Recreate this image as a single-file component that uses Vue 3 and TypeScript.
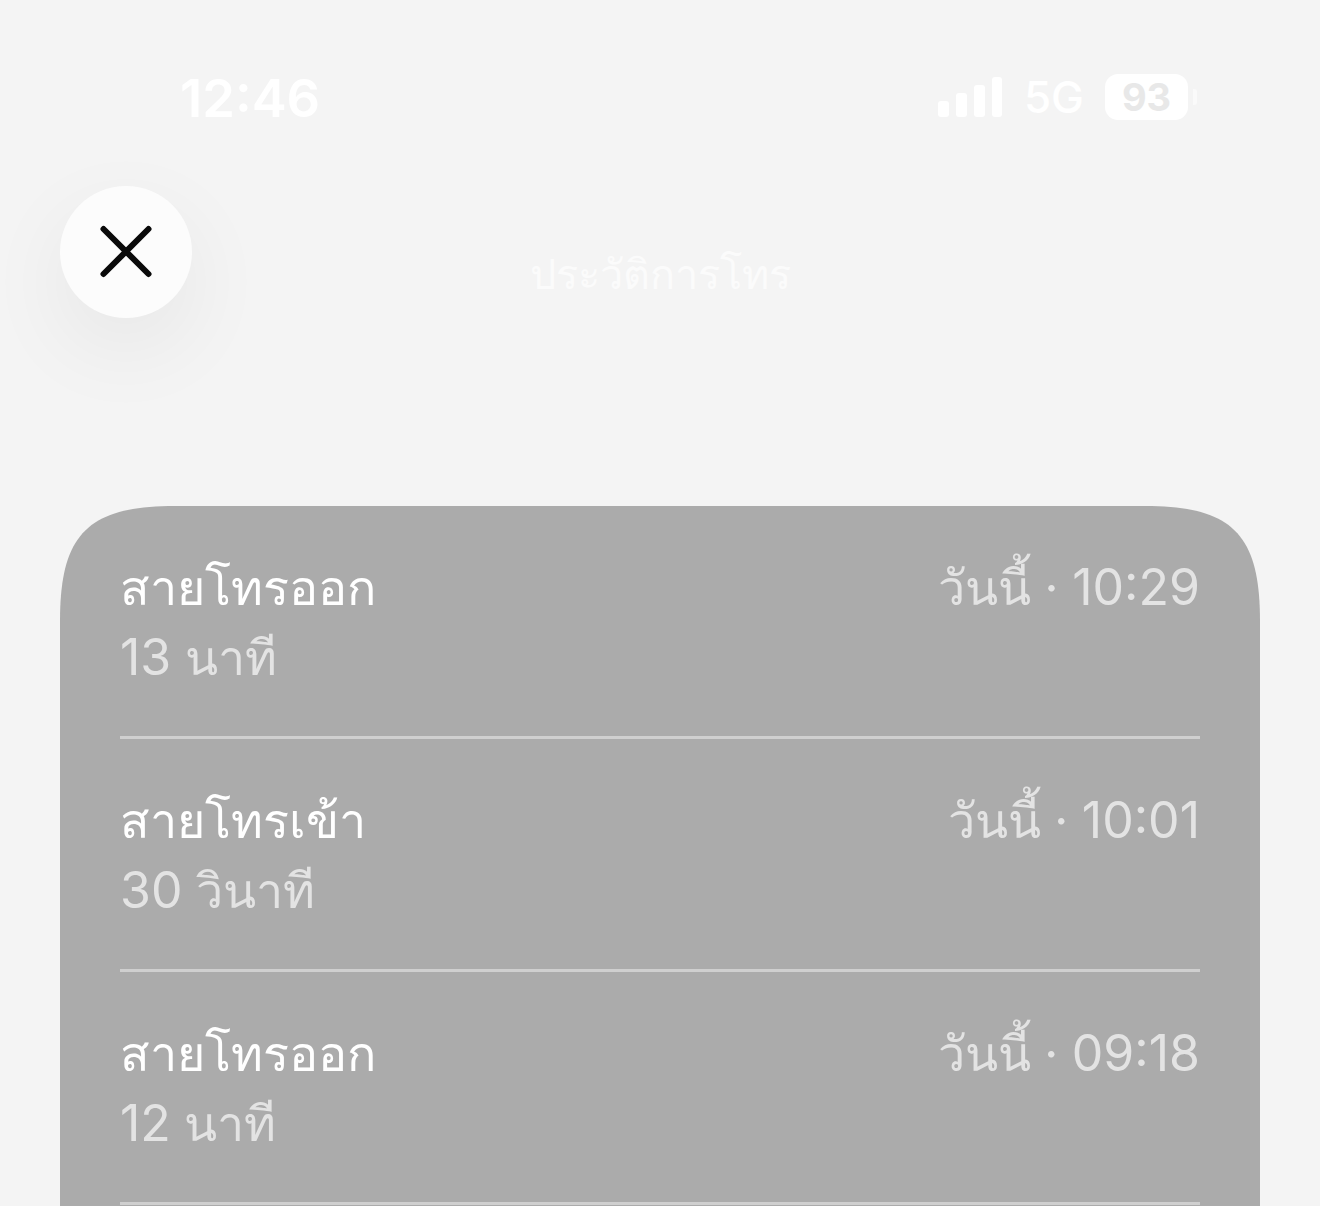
<script setup lang="ts">
type CallRow = {
    title: string
    amount: string
    unit: string
    clock: string
}

const calls: CallRow[] = [
    { title: 'สายโทรออก', amount: '13', unit: 'นาที', clock: '10:29' },
    { title: 'สายโทรเข้า', amount: '30', unit: 'วินาที', clock: '10:01' },
    { title: 'สายโทรออก', amount: '12', unit: 'นาที', clock: '09:18' },
]
</script>

<template>
    <div id="screen">
        <div id="status-bar">
            <span id="clock">12:46</span>
            <div id="status-icons">
                <svg width="66" height="42" viewBox="0 0 66 42" fill="#fff">
                    <rect x="1" y="25" width="11" height="16" rx="3" />
                    <rect x="19" y="17" width="11" height="24" rx="3" />
                    <rect x="37" y="9" width="11" height="32" rx="3" />
                    <rect x="55" y="1" width="10" height="40" rx="3" />
                </svg>
                <span id="network">5G</span>
                <div id="battery">
                    <div id="battery-body">93</div>
                    <div id="battery-tip"></div>
                </div>
            </div>
        </div>

        <div id="header">
            <button id="close-btn">
                <svg width="56" height="56" viewBox="0 0 56 56" fill="none" stroke="#0a0a0a" stroke-width="6" stroke-linecap="round">
                    <path d="M5.5 5 L50.5 50" />
                    <path d="M50.5 5 L5.5 50" />
                </svg>
            </button>
            <div id="title">ประวัติการโทร</div>
        </div>

        <div id="card">
            <div v-for="(call, i) in calls" :key="i" class="call-row">
                <div class="call-top">
                    <span class="call-title">{{ call.title }}</span>
                    <span class="call-time">วันนี้ · <span class="digits">{{ call.clock }}</span></span>
                </div>
                <div class="call-duration"><span class="digits">{{ call.amount }}</span> {{ call.unit }}</div>
            </div>
        </div>
    </div>
</template>

<style scoped>
#screen {
    width: 1320px;
    height: 1206px;
    overflow: hidden;
    background-color: #f4f4f4;
    font-family: Inter, "Noto Sans", "DejaVu Sans", sans-serif;
    display: flex;
    flex-flow: column nowrap;
}

#status-bar {
    height: 186px;
    flex: none;
    padding: 64px 123px 0 180px;
    box-sizing: border-box;
    display: flex;
    flex-flow: row nowrap;
    justify-content: space-between;
    align-items: flex-start;
    color: #fff;
}

#clock {
    font-size: 52.5px;
    font-weight: 600;
    line-height: 68px;
}

#status-icons {
    display: flex;
    flex-flow: row nowrap;
    align-items: center;
    gap: 21px;
    height: 66px;
}

#network {
    font-size: 44px;
    font-weight: 500;
    line-height: 66px;
}

#battery {
    display: flex;
    flex-flow: row nowrap;
    align-items: center;
    gap: 5px;
}

#battery-body {
    width: 83px;
    height: 46px;
    border-radius: 13px;
    background-color: #fff;
    color: #e8e8e8;
    font-size: 38px;
    font-weight: 700;
    line-height: 46px;
    text-align: center;
}

#battery-tip {
    width: 4px;
    height: 16px;
    border-radius: 0 3px 3px 0;
    background-color: #fafafa;
}

#header {
    height: 320px;
    flex: none;
    padding-left: 60px;
    display: flex;
    flex-flow: row nowrap;
    align-items: flex-start;
    position: relative;
}

#close-btn {
    width: 132px;
    height: 132px;
    border: none;
    border-radius: 50%;
    padding: 0;
    background-color: #fcfcfc;
    box-shadow: 0 30px 90px rgba(0, 0, 0, 0.06);
    display: flex;
    justify-content: center;
    align-items: center;
}

#title {
    position: absolute;
    left: 0;
    right: 0;
    top: 63px;
    text-align: center;
    color: #fbfbfb;
    font-size: 41.5px;
    font-weight: 500;
    line-height: 50px;
}

#card {
    margin: 0 60px;
    padding: 0 60px;
    flex: 1;
    background-color: #ababab;
    clip-path: path("M0 700 V115 C0 28 28 0 115 0 H1085 C1172 0 1200 28 1200 115 V700 Z");
}

.call-row {
    height: 233px;
    box-sizing: border-box;
    padding-top: 47px;
    border-bottom: 3px solid #cfcfcf;
}

.call-top {
    display: flex;
    flex-flow: row nowrap;
    justify-content: space-between;
    align-items: baseline;
}

.call-title {
    color: #fff;
    font-size: 48.5px;
    line-height: 68px;
}

.call-time {
    color: #e3e3e3;
    font-size: 48.5px;
    line-height: 68px;
}

.call-duration {
    color: #e3e3e3;
    font-size: 48.5px;
    line-height: 68px;
    margin-top: 1px;
}

.digits {
    font-size: 50px;
}
</style>
<style>
html, body {
    margin: 0;
    background-color: #f4f4f4;
}
</style>
